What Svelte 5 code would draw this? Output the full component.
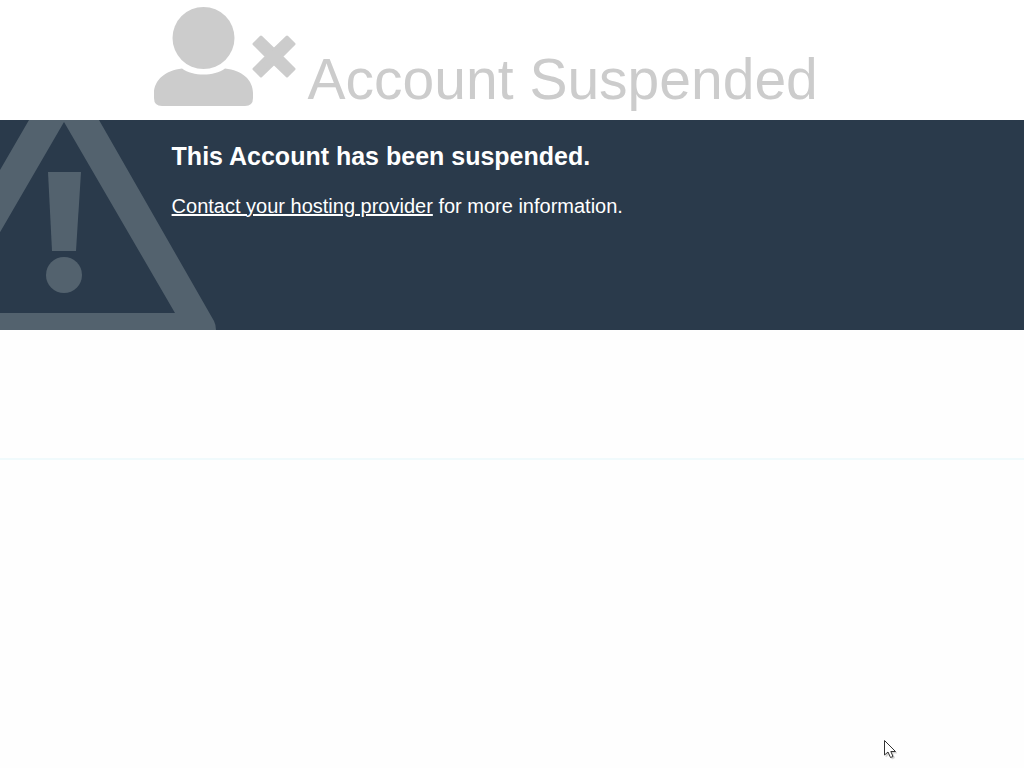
<script lang="ts">
  const title = 'Account Suspended'
  const contactUrl = '#contact'
</script>

<div class="page">
  <header>
    <div class="container head">
      <svg class="user-icon" viewBox="0 0 144 100" aria-hidden="true">
        <circle cx="49.500" cy="31" r="31" />
        <path d="M28 61.500C39 69.500 60 69.500 71 61.500C88 63 99 73 99 86V91Q99 99 91 99H8Q0 99 0 91V86C0 73 12 63 28 61.500Z" />
        <path
          class="cross"
          d="M107 30L120 42.500L133 30L140 37L127.500 49.500L140 62L133 69L120 56.500L107 69L100 62L112.500 49.500L100 37Z"
        />
      </svg>
      <h1>{title}</h1>
    </div>
  </header>

  <main>
    <svg class="warning" viewBox="0 0 216 210" aria-hidden="true">
      <path
        fill-rule="evenodd"
        d="M29 0H99L214 201Q216 205 216 210H-88V202L29 0ZM64 2L-47 193H175Z"
      />
      <path d="M48 52H81L76 131H52Z" />
      <circle cx="64" cy="155" r="18" />
    </svg>
    <div class="container message">
      <h2>This Account has been suspended.</h2>
      <p><a href={contactUrl}>Contact your hosting provider</a> for more information.</p>
    </div>
  </main>

  <footer></footer>

  <svg class="pointer" viewBox="0 0 16 22" aria-hidden="true">
    <path class="shadow" d="M3 3V18L6.500 15L9 20L11.500 19L9.500 14H14Z" />
    <path d="M1.500 1.500V16L5 13L7.500 18.500L10 17.500L7.800 12.500H12.500Z" />
  </svg>
</div>

<style>
  :global(body) {
    margin: 0;
    background: #fefefe;
  }

  .page {
    position: relative;
    min-height: 100vh;
    overflow: hidden;
    font-family: "Liberation Sans", Arial, Helvetica, sans-serif;
  }

  .container {
    width: 70%;
    margin: 0 auto;
  }

  header {
    background: #fff;
  }

  .head {
    display: flex;
    align-items: flex-start;
    gap: 10px;
    min-height: 113px;
    padding-top: 7px;
    color: #ccc;
  }

  .user-icon {
    width: 144px;
    height: 100px;
    flex-shrink: 0;
    fill: currentColor;
  }

  .cross {
    stroke: currentColor;
    stroke-width: 3;
    stroke-linejoin: round;
  }

  h1 {
    margin: 40px 0 0;
    font-size: 57px;
    font-weight: 400;
    line-height: 64px;
    white-space: nowrap;
  }

  main {
    position: relative;
    min-height: 210px;
    background: #2a3a4b;
    color: #fff;
  }

  .warning {
    position: absolute;
    top: 0;
    left: 0;
    width: 216px;
    height: 210px;
    fill: #53626e;
  }

  .message {
    position: relative;
    box-sizing: border-box;
    padding: 20px 18px;
  }

  h2 {
    margin: 0;
    font-size: 25px;
    line-height: 32px;
  }

  p {
    margin: 22px 0 0;
    font-size: 20px;
    line-height: 24px;
  }

  a {
    color: inherit;
    text-decoration: underline;
  }

  footer {
    margin-top: 128px;
    border-top: 2px solid #f0fafc;
  }

  .pointer {
    position: absolute;
    right: 125px;
    bottom: 7px;
    width: 16px;
    height: 22px;
    fill: #fff;
    stroke: #333;
    stroke-width: 1;
  }

  .shadow {
    fill: #ccc;
    stroke: #ddd;
  }
</style>
